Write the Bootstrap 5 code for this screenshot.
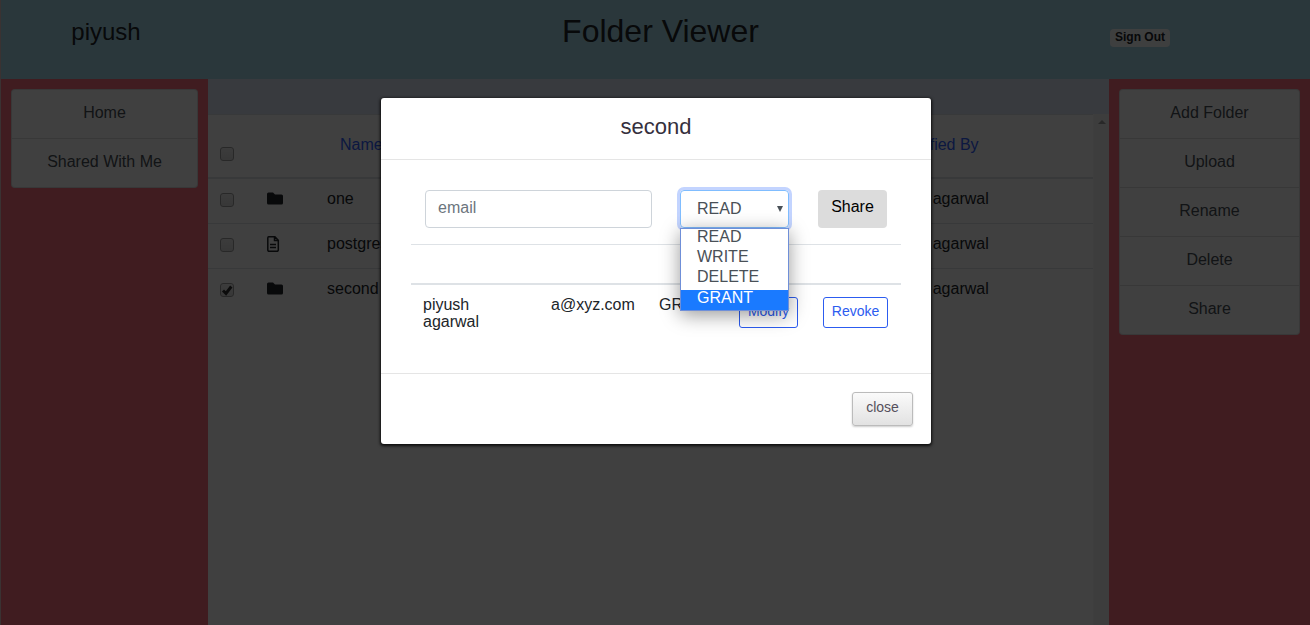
<!DOCTYPE html>
<html lang="en">
<head>
<meta charset="utf-8">
<title>Folder Viewer</title>
<link href="https://cdn.jsdelivr.net/npm/bootstrap@5.3.0/dist/css/bootstrap.min.css" rel="stylesheet">
<style>
body{font-family:"Liberation Sans",Arial,sans-serif;height:625px;overflow:hidden;color:#212529;background:#fff}
.app{height:625px;border-left:1px solid #e8c8c8}
.topbar{height:79px;background:#a8dcec}
.user-cell{width:210px;padding-top:14px;font-size:24px}
.title-cell{padding-top:7px;font-size:32px}
.out-cell{width:200px;padding-top:29px}
.out-btn{display:block;width:60px;height:18px;border-radius:4px;background:#f8f9fa;font-size:12px;font-weight:700;line-height:16px;text-align:center}
.side{background:#ff7080;padding:10px}
.side-l{width:207px}.side-r{width:201px}
.side .list-group-item{height:49px;padding:11px 0 12px;line-height:24px;text-align:center;color:#495057;border-color:rgba(0,0,0,.125)}
.side .list-group-item:first-child{height:50px;padding-top:11px}
.side .list-group{border-radius:4px;--bs-list-group-border-radius:4px}
.tools{height:35px;background:#e0e8f8}
.files{display:grid;grid-template-columns:59px 60px 544px 1fr;border-top:1px solid #dee2e6;height:63px}
.files.frow{height:45px}
.files.first{height:46px;border-top:2px solid #dee2e6}
.files a{color:#3060ff;text-decoration:none}
.chk{width:14px;height:14px;border:1px solid #a0a0a0;border-radius:3px;background:linear-gradient(#eee,#dcdcdc);margin:14px 0 0 12px;display:block}
.chk-all{margin-top:32px}
.nm{padding-top:8px}
.by{padding-left:11px}
.hd{padding:18px 0 0 13px}
.hd-by{padding-left:24px}
.ic{display:block;margin-top:11px}
.ic-doc{margin-top:12px}
.sbar{width:16px;background:#f1f1f1;border-left:1px solid #f8f8f8}
.veil{position:absolute;inset:0;background:rgba(0,0,0,.75)}
.dlg{width:550px;height:346px;margin-top:98px;border-radius:3px;background:#fff;box-shadow:0 1px 3px 1px rgba(0,0,0,.8)}
.dlg-head{height:62px;border-bottom:1px solid #e5e5e5;font-size:22px;line-height:57px;color:#35303d}
.dlg-body{height:213px;padding:30px 30px 0}
.dlg-foot{height:71px;border-top:1px solid #e5e5e5;padding:18px}
.frm{padding-left:14px;height:55px;border-bottom:1px solid #dee2e6}
.frm .form-control{width:227px;height:38px;border-color:#ced4da;border-radius:4px;padding:5px 12px 7px}
.frm .form-control::placeholder{color:#6c757d}
.sel{width:109px;height:38px;margin-left:28px;border:1px solid #80bdff;border-radius:4px;box-shadow:0 0 0 3px #c3d4ff;color:#495057;padding:0 5px 0 16px;line-height:35px}
.opts{top:37px;left:-1px;width:109px;height:83px;border:1px solid #6f8fd8;background:#fff;box-shadow:0 4px 18px rgba(0,0,0,.4);z-index:2;line-height:20px}
.opts div{height:20px;padding-left:16px;line-height:16px}
.opts .sel-on{height:20px;margin-top:1px;background:#1a7aff;color:#fff;line-height:15px}
.share-btn{width:69px;height:38px;margin-left:29px;padding:0 0 4px;border:0;border-radius:4px;background:#dcdcdc;color:#000;line-height:34px}
.people{margin-top:38px;border-top:2px solid #dee2e6;display:grid;grid-template-columns:128px 108px 80px 84px 1fr;padding:11px 0 0 12px;line-height:17px}
.act{height:31px;margin-top:1px;border:1px solid #2c5cf0;border-radius:3px;color:#2c5cf0;font-size:14px;line-height:27px;text-align:center;padding:0 0 2px;background:#fff}
.close-btn{width:61px;height:34px;border:1px solid #bbb;border-radius:3px;background:linear-gradient(#fafafa,#e2e2e2);box-shadow:0 1px 2px rgba(0,0,0,.2);font-size:14px;line-height:28px;color:#55505c;padding:0 0 4px}
</style>
</head>
<body class="position-relative">
<div class="app d-flex flex-column">
  <header class="topbar d-flex text-center">
    <div class="user-cell">piyush</div>
    <div class="title-cell flex-grow-1">Folder Viewer</div>
    <div class="out-cell"><span class="out-btn">Sign Out</span></div>
  </header>
  <div class="d-flex flex-grow-1">
    <aside class="side side-l"><div class="list-group">
      <div class="list-group-item">Home</div><div class="list-group-item">Shared With Me</div>
    </div></aside>
    <main class="flex-grow-1 d-flex flex-column">
      <div class="tools"></div>
      <div class="d-flex flex-grow-1">
        <div class="flex-grow-1">
          <div class="files">
            <div><span class="chk chk-all"></span></div><div></div>
            <div class="hd"><a href="#">Name</a></div>
            <div class="hd hd-by"><a href="#">Modified By</a></div>
          </div>
          <div class="files frow first">
            <div><span class="chk"></span></div>
            <div><svg class="ic" width="16" height="16" viewBox="0 0 16 16"><path fill="#212529" d="M1.500 2.500H6l2 2h6.500q1.500 0 1.500 1.500v7q0 1.500-1.500 1.500h-13Q0 14.500 0 13V4Q0 2.500 1.500 2.500z"/></svg></div>
            <div class="nm">one</div><div class="nm by">piyush agarwal</div>
          </div>
          <div class="files frow">
            <div><span class="chk"></span></div>
            <div><svg class="ic ic-doc" width="16" height="16" viewBox="0 0 16 16"><path fill="none" stroke="#212529" stroke-width="1.500" d="M1.700.8h6.200l3.400 3.400v9.900q0 1.200-1.200 1.200H1.900Q.8 15.300.8 14.100V1.900Q.8.8 1.700.8zM7.500 1v3.500H11M3 8.500h6M3 11.500h6"/></svg></div>
            <div class="nm">postgres</div><div class="nm by">piyush agarwal</div>
          </div>
          <div class="files frow">
            <div><span class="chk"><svg class="d-block" width="12" height="12" viewBox="0 0 12 12"><path d="M2 6.500l3 3L10.300 2.500" fill="none" stroke="#333" stroke-width="2.900"/></svg></span></div>
            <div><svg class="ic" width="16" height="16" viewBox="0 0 16 16"><path fill="#212529" d="M1.500 2.500H6l2 2h6.500q1.500 0 1.500 1.500v7q0 1.500-1.500 1.500h-13Q0 14.500 0 13V4Q0 2.500 1.500 2.500z"/></svg></div>
            <div class="nm">second</div><div class="nm by">piyush agarwal</div>
          </div>
        </div>
        <div class="sbar"><svg class="d-block mx-auto" width="8" height="10" viewBox="0 0 8 10"><path fill="#a0a0a0" d="M0 10l4-4 4 4z"/></svg></div>
      </div>
    </main>
    <aside class="side side-r"><div class="list-group">
      <div class="list-group-item">Add Folder</div><div class="list-group-item">Upload</div><div class="list-group-item">Rename</div><div class="list-group-item">Delete</div><div class="list-group-item">Share</div>
    </div></aside>
  </div>
</div>
<div class="veil">
  <div class="d-flex justify-content-center" style="padding-left:2px">
    <section class="dlg">
      <div class="dlg-head text-center">second</div>
      <div class="dlg-body">
        <div class="frm d-flex">
          <input class="form-control flex-shrink-0" placeholder="email">
          <div class="sel position-relative d-flex justify-content-between"><span>READ</span><svg width="6" height="6" viewBox="0 0 6 6" style="margin-top:15px"><path fill="#495057" d="M0 0h6L3 6z"/></svg>
            <div class="opts position-absolute"><div>READ</div><div>WRITE</div><div>DELETE</div><div class="sel-on">GRANT</div></div>
          </div>
          <button class="share-btn">Share</button>
        </div>
        <div class="people">
          <div>piyush<br>agarwal</div><div>a@xyz.com</div><div>GRANT</div>
          <div><button class="act" style="width:59px">Modify</button></div><div><button class="act" style="width:65px">Revoke</button></div>
        </div>
      </div>
      <div class="dlg-foot d-flex justify-content-end"><button class="close-btn">close</button></div>
    </section>
  </div>
</div>
<script src="https://cdn.jsdelivr.net/npm/bootstrap@5.3.0/dist/js/bootstrap.bundle.min.js"></script>
</body>
</html>
